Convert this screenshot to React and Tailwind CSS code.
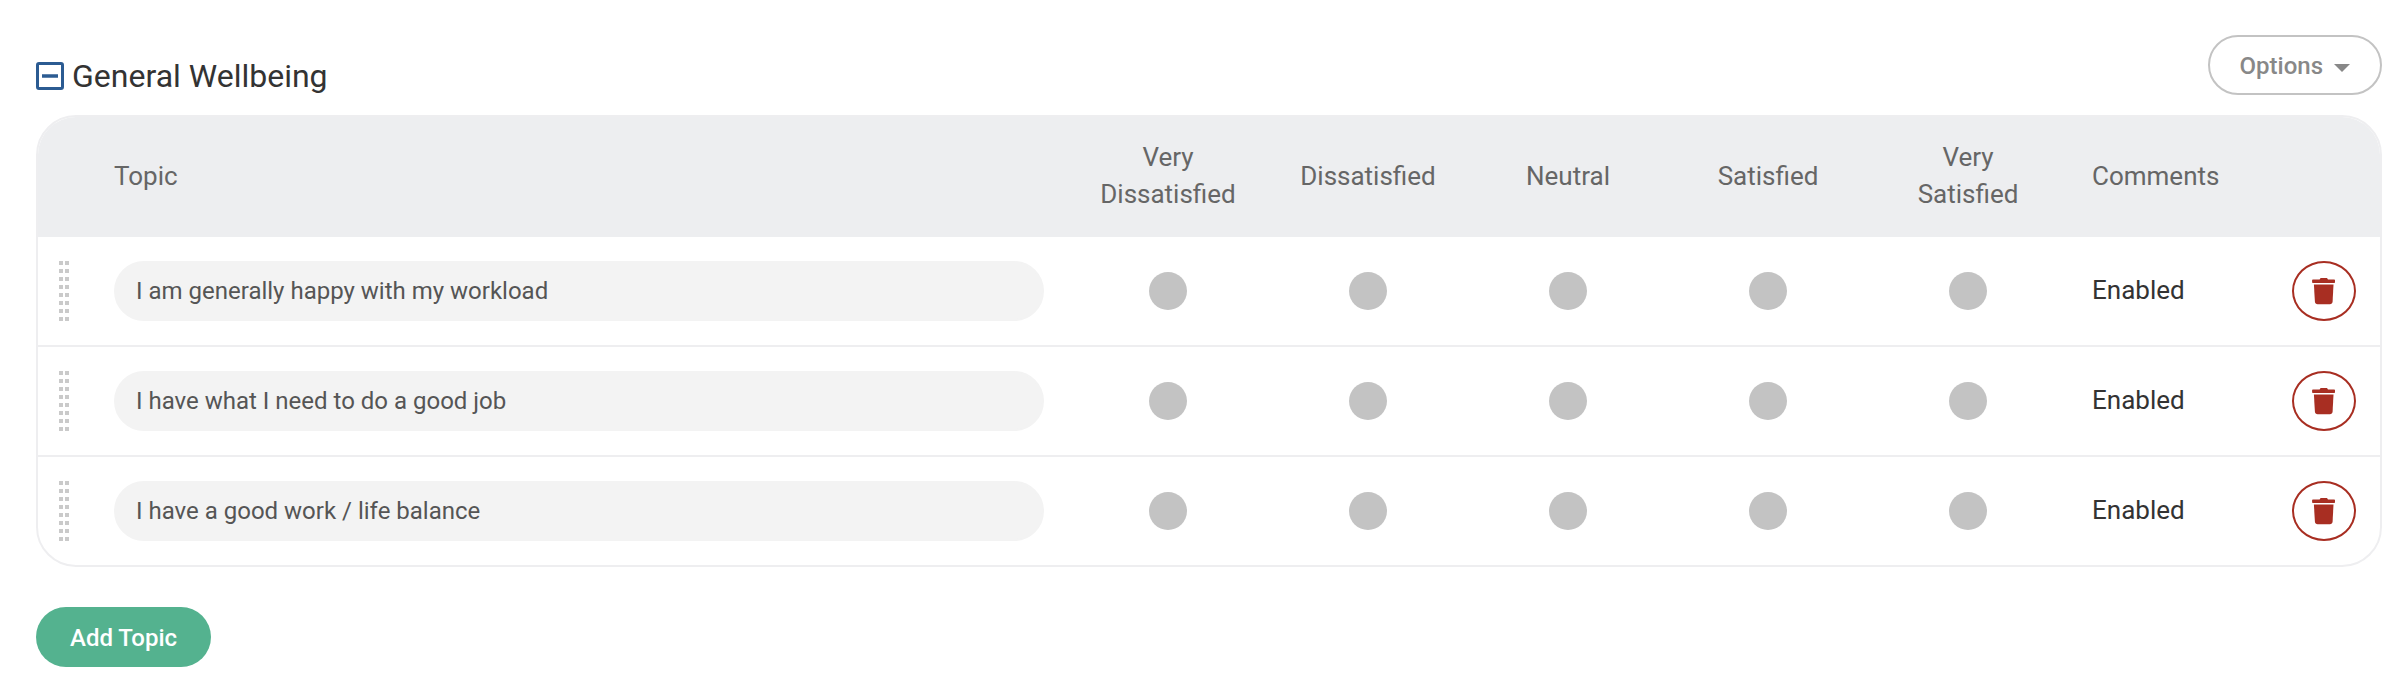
import React, { useState } from 'react';

const RATINGS = ['Very Dissatisfied', 'Dissatisfied', 'Neutral', 'Satisfied', 'Very Satisfied'];

const INITIAL_TOPICS = [
  { id: 1, text: 'I am generally happy with my workload', comments: 'Enabled' },
  { id: 2, text: 'I have what I need to do a good job', comments: 'Enabled' },
  { id: 3, text: 'I have a good work / life balance', comments: 'Enabled' },
];

function DragHandle() {
  const rows = [0, 8, 16, 24, 32, 40, 48, 56];
  return (
    <svg width="10" height="60" viewBox="0 0 10 60" fill="#cacaca" className="block cursor-move">
      {rows.map((y) => (
        <g key={y}>
          <rect x="0" y={y} width="4" height="4" />
          <rect x="6" y={y} width="4" height="4" />
        </g>
      ))}
    </svg>
  );
}

function TrashIcon() {
  return (
    <svg width="24" height="28" viewBox="0 0 24 28" fill="currentColor">
      <path d="M8.6 1h6.4l1 1.400h6.200c.5 0 .8.3.8.8v2.100c0 .4-.3.7-.7.7H.8c-.4 0-.7-.3-.7-.7V3.200c0-.5.3-.8.8-.8h6.700z" />
      <path d="M1.900 7.500h19.600l-.9 17c-.1 1.700-1.200 2.700-2.700 2.700H5.600c-1.500 0-2.600-1-2.700-2.700z" />
    </svg>
  );
}

function TopicRow({ topic, onChange, onDelete }) {
  return (
    <tr className="border-b-2 border-[#eeeef0] last:border-b-0">
      <td className="py-6 pl-[21px]">
        <DragHandle />
      </td>
      <td className="px-6 py-6">
        <input
          type="text"
          aria-label="Topic"
          value={topic.text}
          onChange={(e) => onChange(topic.id, e.target.value)}
          className="block h-[60px] w-full rounded-full border-2 border-[#f3f3f3] bg-[#f3f3f3] px-5 text-2xl text-[#555555] outline-none"
        />
      </td>
      {RATINGS.map((rating) => (
        <td key={rating}>
          <input
            type="radio"
            name={`topic-${topic.id}`}
            aria-label={rating}
            className="mx-auto block size-[38px] appearance-none rounded-full bg-[#c3c3c3] checked:bg-[#54b28f]"
          />
        </td>
      ))}
      <td className="px-6 pb-0.5 text-[26px] leading-[37px] text-[#333333]">{topic.comments}</td>
      <td className="px-6">
        <button
          type="button"
          aria-label="Delete topic"
          onClick={() => onDelete(topic.id)}
          className="flex h-[60px] w-16 cursor-pointer items-center justify-center rounded-[50%] border-2 border-[#a82e22] text-[#a82e22]"
        >
          <TrashIcon />
        </button>
      </td>
    </tr>
  );
}

export default function App() {
  const [topics, setTopics] = useState(INITIAL_TOPICS);
  const [open, setOpen] = useState(true);

  const changeTopic = (id, text) => {
    setTopics(topics.map((t) => (t.id === id ? { ...t, text } : t)));
  };

  const deleteTopic = (id) => {
    setTopics(topics.filter((t) => t.id !== id));
  };

  const addTopic = () => {
    setTopics([...topics, { id: Date.now(), text: '', comments: 'Enabled' }]);
  };

  return (
    <section className="bg-white pt-[35px] pr-6 pb-6 pl-9 font-['Roboto',sans-serif]">
      {/* Section heading */}
      <div className="mb-[18px] flex items-start justify-between">
        <div className="flex items-center gap-2 pt-5">
          <button
            type="button"
            aria-label="Toggle section"
            onClick={() => setOpen(!open)}
            className="cursor-pointer text-[#2b5b92]"
          >
            <svg width="28" height="28" viewBox="0 0 28 28" fill="none" stroke="currentColor" strokeWidth="3" className="block">
              <rect x="1.5" y="1.5" width="25" height="25" rx="1.5" />
              <line x1="6" y1="14" x2="22" y2="14" strokeWidth="3.5" />
            </svg>
          </button>
          <h2 className="text-[32px] leading-[42px] text-[#333333]">General Wellbeing</h2>
        </div>
        <button
          type="button"
          className="flex h-[60px] cursor-pointer items-center gap-[11px] rounded-full border-2 border-[#c3c3c3] px-[30px] pt-0.5 text-2xl font-medium text-[#888888]"
        >
          Options
          <svg width="16" height="12" viewBox="0 0 16 12" fill="currentColor">
            <path d="M0 4h16L8 12z" />
          </svg>
        </button>
      </div>

      {/* Topics */}
      {open && (
        <div className="overflow-hidden rounded-[40px] border-2 border-[#eeeef0]">
          <table className="w-full table-fixed">
            <thead className="bg-[#edeef0] text-[26px] leading-[37px] text-[#666666]">
              <tr>
                <th className="w-[52px]"></th>
                <th className="px-6 pt-[22px] pb-6 text-left font-normal">Topic</th>
                {RATINGS.map((rating) => (
                  <th key={rating} className="w-[200px] px-6 pt-[22px] pb-6 font-normal">
                    {rating}
                  </th>
                ))}
                <th className="w-[200px] px-6 pt-[22px] pb-6 text-left font-normal">Comments</th>
                <th className="w-28"></th>
              </tr>
            </thead>
            <tbody>
              {topics.map((topic) => (
                <TopicRow key={topic.id} topic={topic} onChange={changeTopic} onDelete={deleteTopic} />
              ))}
            </tbody>
          </table>
        </div>
      )}

      <button
        type="button"
        onClick={addTopic}
        className="mt-10 h-[60px] cursor-pointer rounded-full bg-[#54b28f] px-[34px] pt-0.5 text-2xl font-medium text-white"
      >
        Add Topic
      </button>
    </section>
  );
}
